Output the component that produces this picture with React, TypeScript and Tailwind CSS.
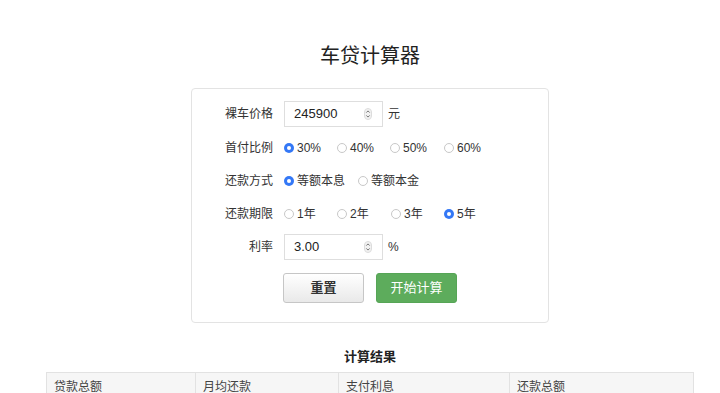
import type { ReactNode } from 'react'

const font = { fontFamily: '"Liberation Sans", "Noto Sans CJK SC", sans-serif' }

function Radio({ checked, label, width }: { checked?: boolean; label: string; width: string }) {
  return (
    <label className={`flex items-center ${width}`}>
      {checked ? (
        <span className="mr-[3px] flex h-[10px] w-[10px] items-center justify-center rounded-full bg-[#3478f6]">
          <span className="h-[4px] w-[4px] rounded-full bg-white" />
        </span>
      ) : (
        <span className="mr-[3px] h-[10px] w-[10px] rounded-full border border-[#c8c8c8] bg-white" />
      )}
      <span>{label}</span>
    </label>
  )
}

function Spinner() {
  return (
    <svg width="8" height="12" viewBox="0 0 8 12" className="text-[#666]">
      <rect x="0.5" y="0.5" width="7" height="11" rx="3.5" fill="#f2f2f2" stroke="#dcdcdc" />
      <path d="M2.3 4.6 L4 2.9 L5.7 4.6" fill="none" stroke="currentColor" strokeWidth="0.9" />
      <path d="M2.3 7.4 L4 9.1 L5.7 7.4" fill="none" stroke="currentColor" strokeWidth="0.9" />
    </svg>
  )
}

function Row({ label, children, className = '' }: { label: string; children: ReactNode; className?: string }) {
  return (
    <div className={`flex h-[26px] items-center ${className}`}>
      <div className="w-[82px] shrink-0 pr-[1px] text-right text-[12px] text-[#333]">{label}</div>
      <div className="ml-[10px] flex items-center text-[12px] text-[#333]">{children}</div>
    </div>
  )
}

function NumberInput({ value, unit }: { value: string; unit: string }) {
  return (
    <>
      <div className="flex h-[26px] w-[99px] items-center justify-between border border-[#dedede] bg-white pl-[9px] pr-[10px] text-[13px] text-[#222]">
        <span>{value}</span>
        <Spinner />
      </div>
      <span className="ml-[5px] text-[12px] text-[#333]">{unit}</span>
    </>
  )
}

export default function App() {
  const columns = [
    { title: '贷款总额', width: 'w-[149px]' },
    { title: '月均还款', width: 'w-[143px]' },
    { title: '支付利息', width: 'w-[171px]' },
    { title: '还款总额', width: 'flex-1' },
  ]

  return (
    <div className="min-h-[393px] bg-white pl-5" style={font}>
      <div className="flex flex-col items-center pt-[43px]">
        <h1 className="text-[20px] leading-[26px] text-[#222]">车贷计算器</h1>

        <div className="mt-[19px] w-[358px] rounded-[4px] border border-[#e3e3e3] bg-white pb-[19px] pt-[12px]">
          <Row label="裸车价格" className="mb-[8px]">
            <NumberInput value="245900" unit="元" />
          </Row>
          <Row label="首付比例" className="mb-[7px]">
            <Radio checked label="30%" width="w-[53px]" />
            <Radio label="40%" width="w-[53px]" />
            <Radio label="50%" width="w-[54px]" />
            <Radio label="60%" width="w-[53px]" />
          </Row>
          <Row label="还款方式" className="mb-[7px]">
            <Radio checked label="等额本息" width="w-[74px]" />
            <Radio label="等额本金" width="w-[74px]" />
          </Row>
          <Row label="还款期限" className="mb-[7px]">
            <Radio label="1年" width="w-[53px]" />
            <Radio label="2年" width="w-[54px]" />
            <Radio label="3年" width="w-[53px]" />
            <Radio checked label="5年" width="w-[53px]" />
          </Row>
          <Row label="利率">
            <NumberInput value="3.00" unit="%" />
          </Row>

          <div className="ml-[91px] mt-[13px] flex gap-[12px]">
            <button className="h-[30px] w-[81px] rounded-[3px] border border-[#c6c6c6] bg-gradient-to-b from-white to-[#e9e9e9] text-[13px] font-bold text-[#333]">
              重置
            </button>
            <button className="h-[30px] w-[81px] rounded-[3px] border border-[#56a556] bg-[#5dac5c] text-[13px] text-white">
              开始计算
            </button>
          </div>
        </div>

        <h2 className="mt-[25px] text-[13px] font-bold leading-[18px] text-[#222]">计算结果</h2>

        <div className="mt-[6px] flex w-[648px] border border-[#e2e2e2] bg-[#f6f6f6] text-[12px] text-[#444]">
          {columns.map((c, i) => (
            <div
              key={c.title}
              className={`${c.width} h-[28px] px-[7px] pt-[5px] ${i < columns.length - 1 ? 'border-r border-[#e2e2e2]' : ''}`}
            >
              {c.title}
            </div>
          ))}
        </div>
      </div>
    </div>
  )
}
